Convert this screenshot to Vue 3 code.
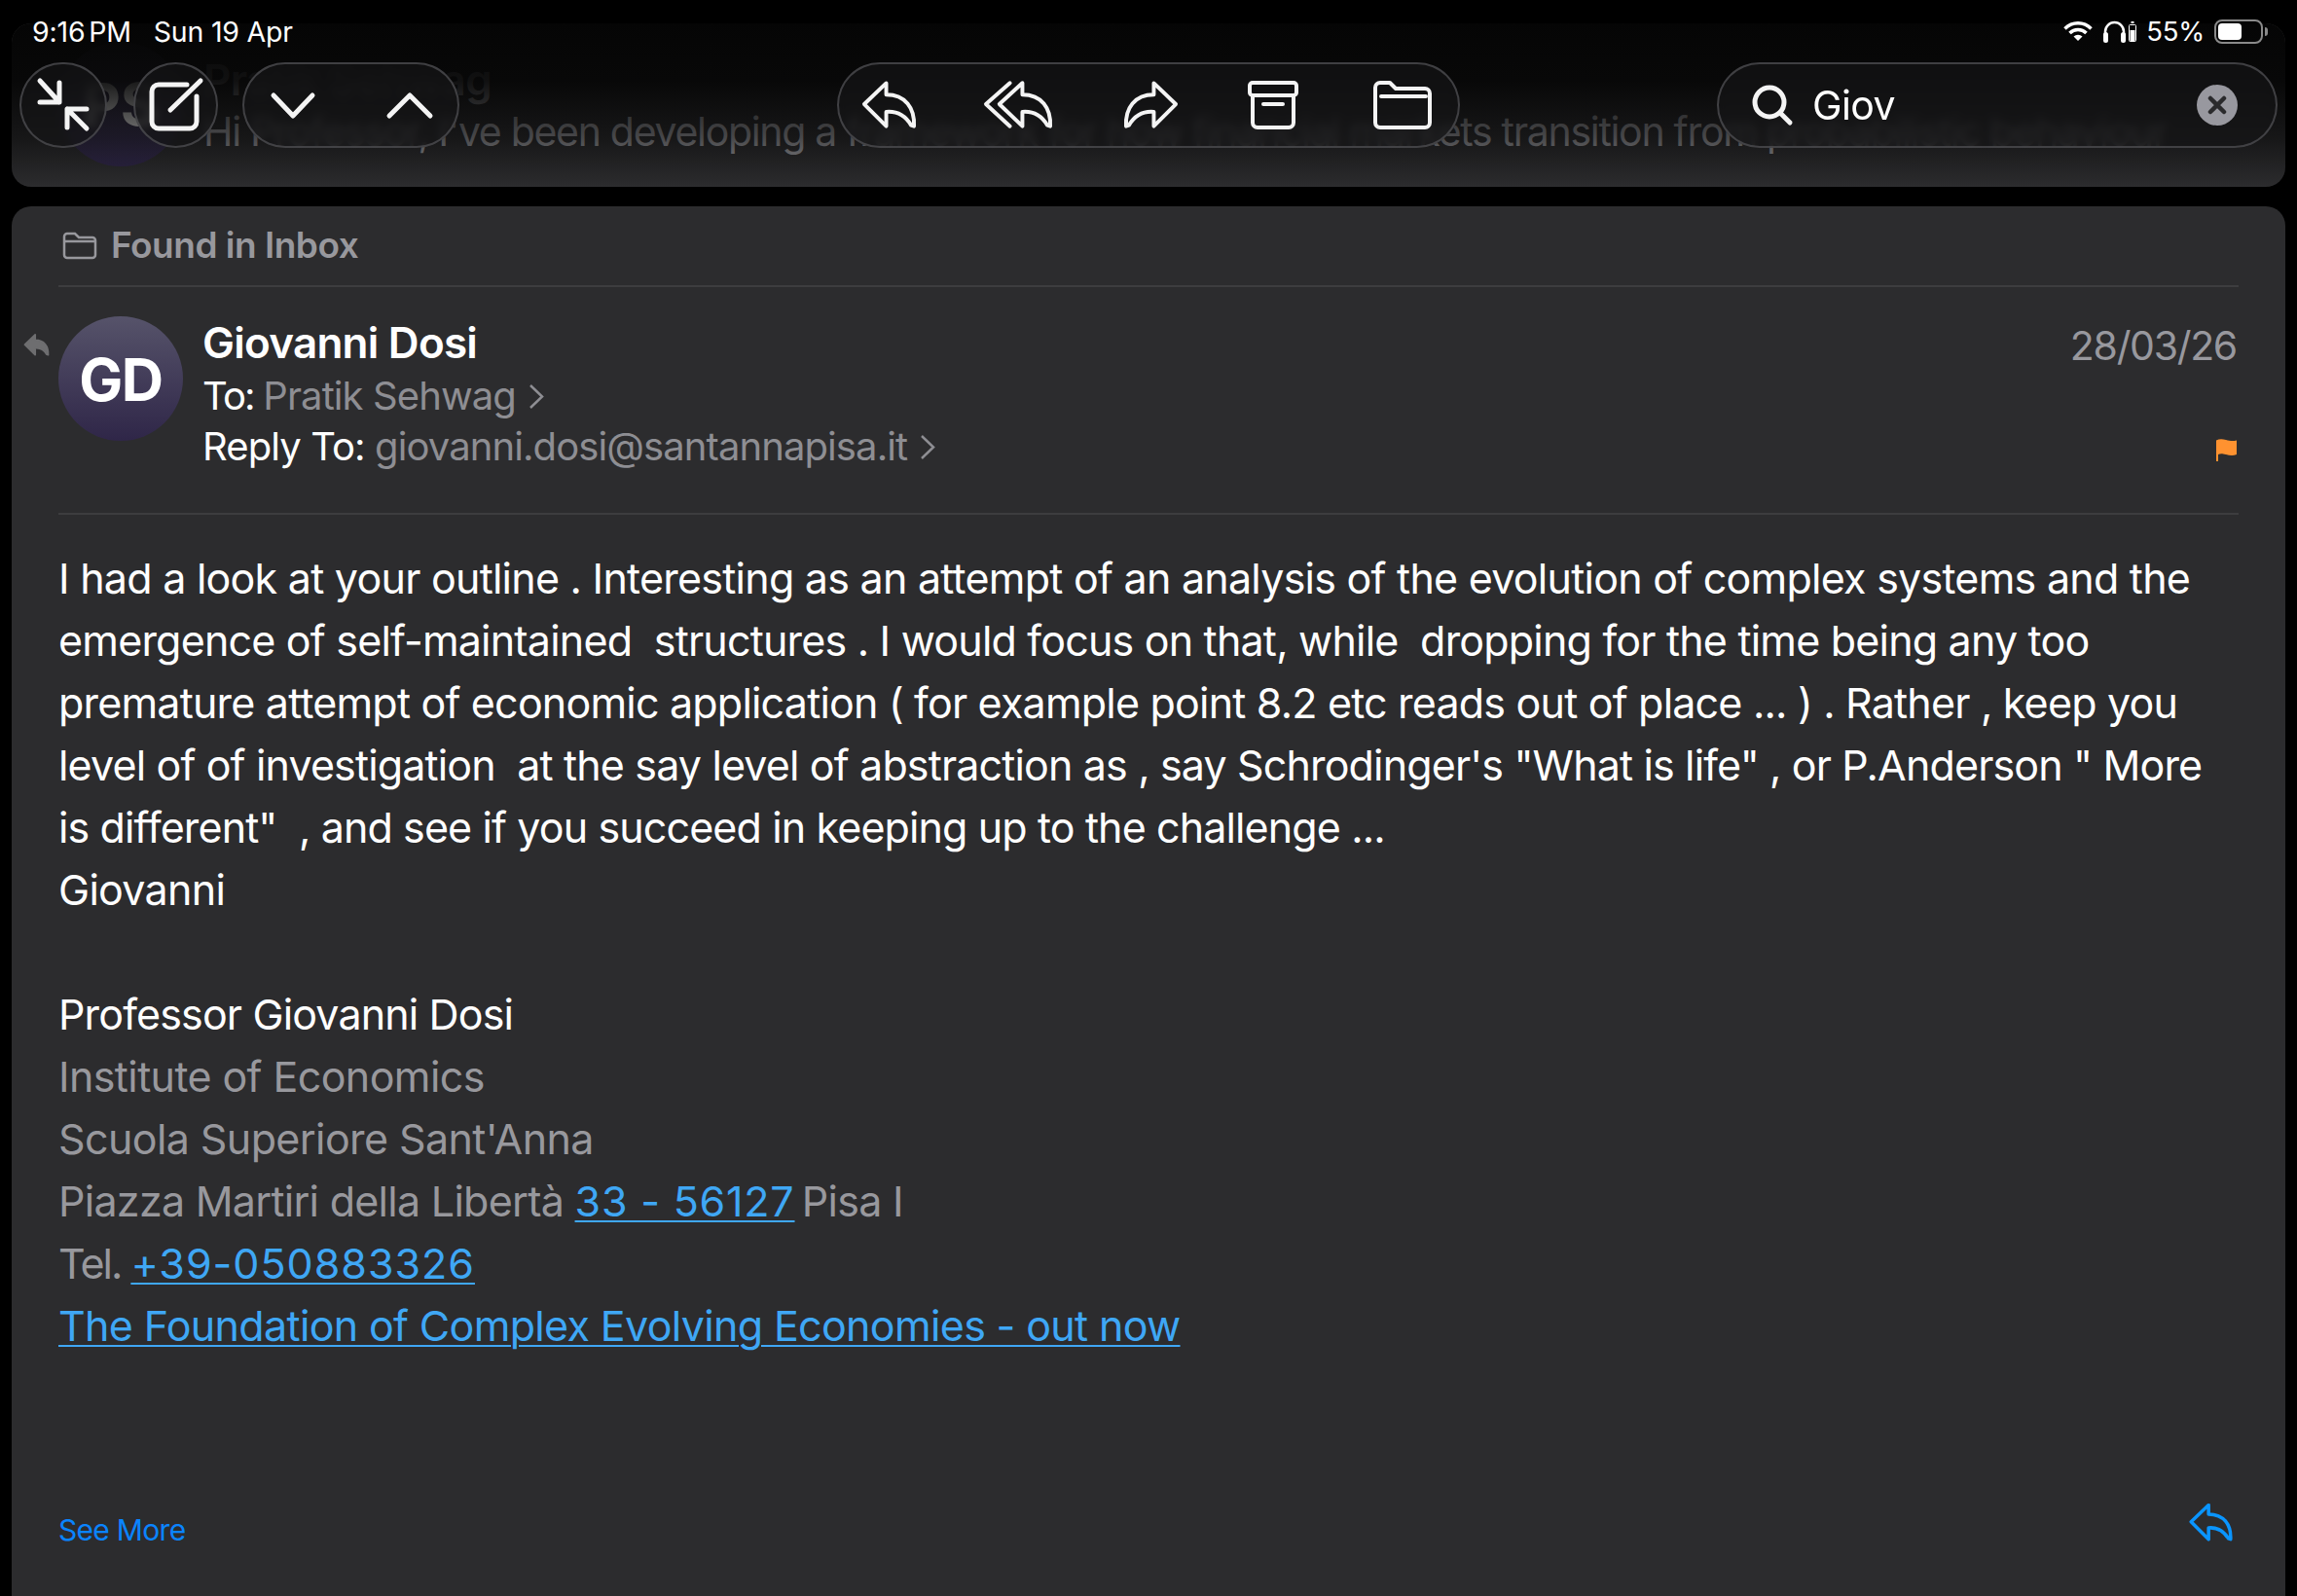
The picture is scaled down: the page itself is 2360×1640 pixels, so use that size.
<template>
  <div class="page">
    <!-- previous message, scrolled under the toolbar -->
    <section class="prev-card">
      <div class="prev-avatar">PS</div>
      <div class="prev-text">
        <div class="prev-name">Pratik Sehwag</div>
        <div class="prev-line">Hi Professor, I've been developing a framework for how financial markets transition from probabilistic behaviour</div>
      </div>
      <div class="prev-fade"></div>
    </section>

    <section class="mail-card">
      <div class="found">
        <svg class="found-icon" viewBox="0 0 36 30">
          <path d="M2 6a3 3 0 0 1 3-3h8l4 4h14a3 3 0 0 1 3 3v15a3 3 0 0 1-3 3H5a3 3 0 0 1-3-3z" />
          <path d="M3 11h30" />
        </svg>
        <span>Found in Inbox</span>
      </div>

      <div class="sender">
        <svg class="replied" viewBox="0 0 56 50"><path :d="replyPath" /></svg>
        <div class="avatar">GD</div>
        <div class="sender-info">
          <div class="name">Giovanni Dosi</div>
          <div class="addr"><span class="to">To: </span><span class="muted">Pratik Sehwag</span>
            <svg class="chev" viewBox="0 0 16 27"><path d="M2 2l12 11.500L2 25" /></svg>
          </div>
          <div class="addr">Reply To: <span class="muted">giovanni.dosi@santannapisa.it</span>
            <svg class="chev" viewBox="0 0 16 27"><path d="M2 2l12 11.500L2 25" /></svg>
          </div>
        </div>
        <div class="meta">
          <div class="date">28/03/26</div>
          <svg class="flag" viewBox="0 0 21 23">
            <path d="M0 1.500C3 0 6 0 10 1s7 1.500 11 .5V16c-4 1.500-7 1-11 0s-6-1-8 0v7H0z" />
          </svg>
        </div>
      </div>

      <div class="body">
        <div v-for="line in bodyLines" :key="line.text" class="line" :style="{ letterSpacing: line.spacing + 'px' }">{{ line.text }}</div>
        <div class="line">&nbsp;</div>
        <div class="line prof">Professor Giovanni Dosi</div>
        <div class="line grey">Institute of Economics</div>
        <div class="line grey">Scuola Superiore Sant'Anna</div>
        <div class="line grey piazza">Piazza Martiri della Libertà <a class="digits">33 - 56127</a> Pisa I</div>
        <div class="line grey"><span class="tel">Tel. </span><a class="digits wide">+39-050883326</a></div>
        <div class="line"><a class="book">The Foundation of Complex Evolving Economies - out now</a></div>
      </div>

      <div class="mail-footer">
        <span class="see-more">See More</span>
        <svg class="reply-blue" viewBox="0 0 56 50"><path :d="replyPath" /></svg>
      </div>
    </section>

    <!-- status bar -->
    <div class="status">
      <div class="status-left">
        <span class="clock">9:16 PM</span>
        <span>Sun 19 Apr</span>
      </div>
      <div class="status-right">
        <svg class="wifi" viewBox="0 0 30 20">
          <path d="M1.500 7.500a19 19 0 0 1 27 0M6.500 12a12 12 0 0 1 17 0" />
          <path class="dot" d="M15 20l-4.500-4.500a6.400 6.400 0 0 1 9 0z" />
        </svg>
        <svg class="phones" viewBox="0 0 23 23">
          <path d="M2 17V11.500a9.500 9.500 0 0 1 19 0V17" />
          <rect class="dot" x="0" y="12" width="5" height="11" rx="2.500" />
          <rect class="dot" x="18" y="12" width="5" height="11" rx="2.500" />
        </svg>
        <svg class="mini-batt" viewBox="0 0 8 21">
          <rect class="dot" x="2.500" y="0" width="3" height="2" />
          <rect x=".5" y="3.500" width="7" height="17" rx="1" />
          <rect class="dot" x="1.500" y="9" width="5" height="11" />
        </svg>
        <span class="pct">55%</span>
        <div class="battery"><div class="battery-fill"></div></div>
        <div class="battery-cap"></div>
      </div>
    </div>

    <!-- floating toolbar -->
    <div class="toolbar">
      <button class="glass round">
        <svg class="ico" width="54" height="52" viewBox="0 0 54 52">
          <path d="M3 1l20 22M23 3v20H3M51 50L31 30M31 49V30h20" />
        </svg>
      </button>
      <button class="glass round compose">
        <svg class="ico" width="54" height="54" viewBox="0 0 54 54">
          <path d="M38 6H9a7 7 0 0 0-7 7v31a7 7 0 0 0 7 7h32a7 7 0 0 0 7-7V18" />
          <path d="M21 32L52 2" />
        </svg>
      </button>
      <div class="glass nav-pill">
        <svg class="ico" width="42" height="23" viewBox="0 0 42 23"><path d="M1 1l20 21L41 1" /></svg>
        <svg class="ico" width="44" height="23" viewBox="0 0 44 23"><path d="M1 22L22 1l21 21" /></svg>
      </div>

      <div class="glass actions">
        <svg class="ico thin" width="55" height="50" viewBox="0 0 56 50"><path :d="replyPath" /></svg>
        <svg class="ico thin" width="70" height="50" viewBox="0 0 71 50">
          <path d="M27 2L2 24l25 23" />
          <path d="M40 2L16 24l24 23V32c12-1 20 4 26 14l3 1c1-19-9-33-29-33z" />
        </svg>
        <svg class="ico thin flip" width="55" height="50" viewBox="0 0 56 50"><path :d="replyPath" /></svg>
        <svg class="ico thin" width="52" height="50" viewBox="0 0 52 50">
          <rect x="2" y="2" width="48" height="13" rx="3" />
          <path d="M5 15v28a5 5 0 0 0 5 5h32a5 5 0 0 0 5-5V15" />
          <path d="M16 24h20" />
        </svg>
        <svg class="ico thin" width="60" height="50" viewBox="0 0 60 50">
          <path d="M2 7a5 5 0 0 1 5-5h10l6 6h30a5 5 0 0 1 5 5v30a5 5 0 0 1-5 5H7a5 5 0 0 1-5-5z" />
          <path d="M8 16h46" />
        </svg>
      </div>

      <div class="glass search">
        <svg class="ico" width="40" height="40" viewBox="0 0 40 40">
          <circle cx="17" cy="17" r="15" />
          <path d="M28 28l10 10" />
        </svg>
        <span class="query">Giov</span>
        <div class="clear">
          <svg viewBox="0 0 42 42"><path d="M14 14l14 14M28 14L14 28" /></svg>
        </div>
      </div>
    </div>
  </div>
</template>

<script setup>
const replyPath = 'M25 2L2 24l23 23V32c12-1 20 4 26 14l3 1C55 28 45 14 25 14z'

const bodyLines = [
  { text: 'I had a look at your outline . Interesting as an attempt of an analysis of the evolution of complex systems and the', spacing: -0.75 },
  { text: 'emergence of self-maintained  structures . I would focus on that, while  dropping for the time being any too', spacing: -0.8 },
  { text: 'premature attempt of economic application ( for example point 8.2 etc reads out of place ... ) . Rather , keep you', spacing: -0.8 },
  { text: 'level of of investigation  at the say level of abstraction as , say Schrodinger\'s "What is life" , or P.Anderson " More', spacing: -0.85 },
  { text: 'is different"  , and see if you succeed in keeping up to the challenge ...', spacing: -0.88 },
  { text: 'Giovanni', spacing: -0.7 },
]
</script>

<style>
html, body {
  background: #000;
}
</style>

<style scoped>
.page {
  position: relative;
  width: 2360px;
  height: 1640px;
  overflow: hidden;
  background: #000;
  color: #fff;
  font-family: Inter, "Noto Sans", sans-serif;
  display: flex;
  flex-direction: column;
  padding: 24px 12px 0;
  box-sizing: border-box;
}

.prev-card {
  position: relative;
  height: 168px;
  flex: none;
  margin-bottom: 20px;
  background: #2c2c2e;
  border-radius: 20px;
  overflow: hidden;
  display: flex;
  gap: 21px;
  padding: 19px 48px 0;
  box-sizing: border-box;
}

.prev-avatar {
  flex: none;
  width: 128px;
  height: 128px;
  border-radius: 50%;
  background: linear-gradient(#56536a, #2f2648);
  display: flex;
  align-items: center;
  justify-content: center;
  font-size: 60px;
  font-weight: 700;
}

.prev-text {
  white-space: nowrap;
}

.prev-name {
  font-size: 44px;
  font-weight: 600;
  line-height: 50px;
  margin-top: 14px;
  letter-spacing: -0.7px;
  color: #98989d;
}

.prev-line {
  font-size: 41px;
  line-height: 60px;
  margin-top: -2px;
  letter-spacing: -1.3px;
  color: #98989d;
}

.prev-fade {
  position: absolute;
  inset: 0;
  background: linear-gradient(#050505 0%, rgba(5, 5, 5, 0.92) 35%, rgba(5, 5, 5, 0.55) 70%, rgba(44, 44, 46, 0) 100%);
}

.mail-card {
  flex: 1;
  background: #2c2c2e;
  border-radius: 20px 20px 0 0;
  padding: 0 48px;
  display: flex;
  flex-direction: column;
  min-height: 0;
}

.found {
  height: 83px;
  flex: none;
  box-sizing: border-box;
  border-bottom: 2px solid #3d3d3f;
  display: flex;
  align-items: center;
  gap: 14px;
  padding: 0 0 2px 4px;
  color: #98989d;
  font-size: 37px;
  font-weight: 600;
  letter-spacing: -0.5px;
}

.found-icon {
  width: 36px;
  height: 30px;
  fill: none;
  stroke: #98989d;
  stroke-width: 2.5;
}

.sender {
  position: relative;
  flex: none;
  height: 234px;
  box-sizing: border-box;
  border-bottom: 2px solid #3d3d3f;
  display: flex;
  gap: 20px;
  padding-top: 30px;
}

.replied {
  position: absolute;
  left: -36px;
  top: 48px;
  width: 27px;
  height: 23px;
  fill: #6e6e70;
  stroke: #6e6e70;
  stroke-width: 4;
  stroke-linejoin: round;
}

.avatar {
  flex: none;
  width: 128px;
  height: 128px;
  border-radius: 50%;
  background: linear-gradient(#56536a, #2f2648);
  display: flex;
  align-items: center;
  justify-content: center;
  font-size: 60px;
  font-weight: 700;
  letter-spacing: -1.5px;
  padding-top: 2px;
  box-sizing: border-box;
}

.sender-info {
  flex: 1;
  margin-top: -2px;
}

.name {
  font-size: 44px;
  font-weight: 600;
  line-height: 58px;
  letter-spacing: -0.75px;
}

.addr {
  font-size: 40px;
  line-height: 52px;
  letter-spacing: -0.9px;
  display: flex;
  white-space: pre;
  align-items: center;
}

.to {
  letter-spacing: -1.8px;
}

.muted {
  color: #8e8e93;
}

.chev {
  width: 16px;
  height: 27px;
  margin-left: 13px;
  fill: none;
  stroke: #8e8e93;
  stroke-width: 2.5;
}

.meta {
  display: flex;
  flex-direction: column;
  align-items: flex-end;
  justify-content: flex-start;
  padding-right: 2px;
}

.date {
  font-size: 41px;
  line-height: 48px;
  color: #98989e;
  letter-spacing: -1.3px;
  margin-top: 6px;
}

.flag {
  width: 21px;
  height: 23px;
  fill: #ff9230;
  margin-top: 72px;
}

.body {
  flex: none;
  padding-top: 33px;
  font-size: 43px;
  letter-spacing: -0.7px;
}

.line {
  height: 64px;
  line-height: 64px;
  white-space: pre;
}

.prof {
  letter-spacing: -0.85px;
}

.grey {
  color: #98989d;
  letter-spacing: -0.6px;
}

.piazza {
  letter-spacing: -0.72px;
}

.tel {
  letter-spacing: -2px;
}

.line a {
  color: #3fa7f5;
  text-decoration: underline;
  text-decoration-thickness: 2px;
  text-underline-offset: 4px;
}

.line a.digits {
  letter-spacing: 0.8px;
}

.piazza a.digits {
  margin-right: -4px;
}

.line a.wide {
  letter-spacing: 1px;
}

.line a.book {
  letter-spacing: -0.66px;
}

.mail-footer {
  margin-top: auto;
  display: flex;
  justify-content: space-between;
  align-items: flex-start;
  padding: 0 6px 50px 0;
}

.see-more {
  color: #0a84ff;
  font-size: 30px;
  line-height: 36px;
  margin-top: 9px;
  letter-spacing: -0.7px;
}

.reply-blue {
  width: 45px;
  height: 39px;
  fill: none;
  stroke: #0a95ff;
  stroke-width: 4.500;
  stroke-linejoin: round;
  stroke-linecap: round;
}

.status {
  position: absolute;
  top: 0;
  left: 33px;
  right: 30px;
  height: 44px;
  display: flex;
  justify-content: space-between;
  align-items: center;
  font-size: 28.5px;
  letter-spacing: -0.2px;
  margin-top: 10px;
}

.status-left {
  display: flex;
  gap: 23px;
}

.clock {
  word-spacing: -4px;
}

.status-right {
  display: flex;
  align-items: center;
  font-size: 27.5px;
}

.status-right svg {
  fill: none;
  stroke: #fff;
}

.status-right .dot {
  fill: #fff;
  stroke: none;
}

.wifi {
  width: 30px;
  height: 20px;
  stroke-width: 3.5;
}

.phones {
  width: 23px;
  height: 23px;
  margin-left: 11px;
  stroke-width: 2.5;
}

.mini-batt {
  width: 8px;
  height: 21px;
  margin-left: 3px;
  stroke-width: 1;
}

.pct {
  margin-left: 10px;
}

.battery {
  width: 50px;
  height: 25px;
  margin-left: 10px;
  box-sizing: border-box;
  border: 2px solid #8a8a8a;
  border-radius: 8px;
  padding: 2px;
}

.battery-fill {
  width: 24px;
  height: 100%;
  background: #fff;
  border-radius: 4px;
}

.battery-cap {
  width: 3px;
  height: 9px;
  margin-left: 2px;
  background: #8a8a8a;
  border-radius: 0 3px 3px 0;
}

.toolbar {
  position: absolute;
  top: 64px;
  left: 20px;
  height: 88px;
  display: flex;
}

.glass {
  box-sizing: border-box;
  height: 88px;
  border: 2px solid rgba(84, 84, 88, 0.7);
  border-radius: 44px;
  background: rgba(22, 22, 23, 0.66);
  backdrop-filter: blur(5px);
  display: flex;
  align-items: center;
  padding: 0;
}

.round {
  width: 90px;
  justify-content: center;
}

.compose {
  width: 87px;
  margin-left: 27px;
}

.nav-pill {
  width: 223px;
  margin-left: 25px;
  padding: 0 27px 0 29px;
  justify-content: space-between;
}

.actions {
  width: 640px;
  margin-left: 388px;
  padding: 0 27px 0 24px;
  justify-content: space-between;
}

.actions .ico:nth-child(2),
.actions .ico:nth-child(3) {
  margin-left: -3px;
  margin-right: 3px;
}

.actions .ico:nth-child(4) {
  margin-left: -4px;
  margin-right: 4px;
}

.search {
  width: 576px;
  margin-left: 264px;
  padding: 0 39px 0 35px;
}

.ico {
  fill: none;
  stroke: #f4f4f4;
  stroke-width: 5;
  stroke-linecap: round;
  stroke-linejoin: round;
  overflow: visible;
  flex: none;
}

.ico.thin {
  stroke-width: 4;
}

.flip {
  transform: scaleX(-1);
}

.query {
  font-size: 41px;
  letter-spacing: -0.6px;
  margin-left: 21px;
  color: #fff;
}

.clear {
  width: 42px;
  height: 42px;
  margin-left: auto;
  border-radius: 50%;
  background: #98989f;
}

.clear svg {
  display: block;
  width: 42px;
  height: 42px;
  fill: none;
  stroke: #2a2a2c;
  stroke-width: 4.5;
  stroke-linecap: round;
}
</style>
